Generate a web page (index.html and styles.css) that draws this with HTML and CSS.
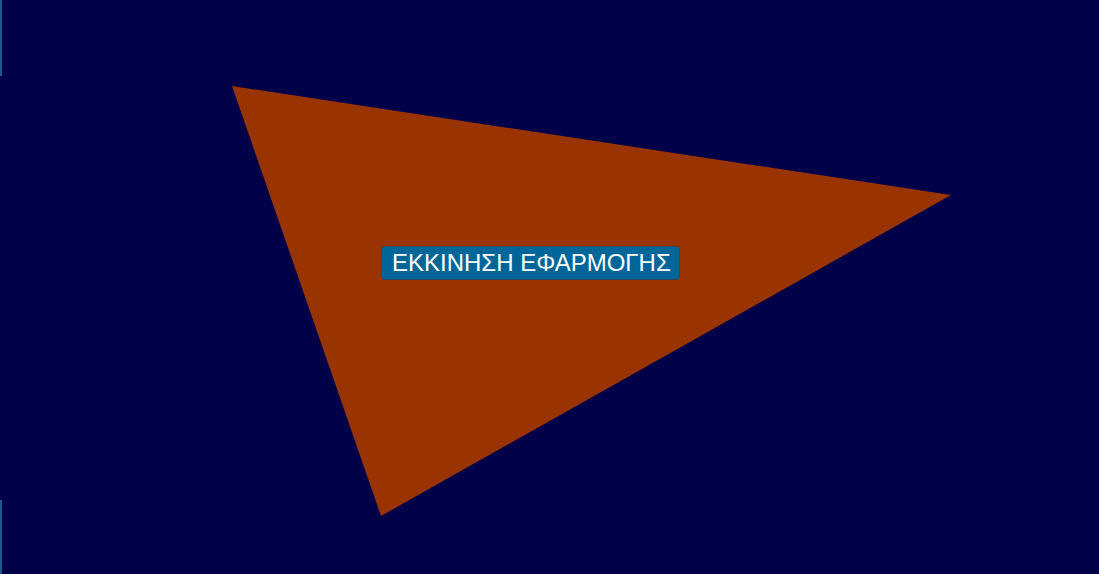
FILE: index.html
```html
<!DOCTYPE html>
<html lang="el">
<head>
<meta charset="utf-8">
<title>Εκκίνηση</title>
<link rel="stylesheet" href="styles.css">
</head>
<body>
<div class="stage">
  <div class="edge edge-top"></div>
  <div class="edge edge-bottom"></div>
  <svg class="shape" width="1099" height="574" viewBox="0 0 1099 574" aria-hidden="true">
    <polygon points="232,86 951,195 381,516" fill="#993300"/>
  </svg>
  <button class="start-btn" type="button">ΕΚΚΙΝΗΣΗ ΕΦΑΡΜΟΓΗΣ</button>
</div>
</body>
</html>
```
FILE: styles.css
```css
html, body {
  margin: 0;
  padding: 0;
  background: #000048;
  overflow: hidden;
}
.stage {
  position: relative;
  width: 1099px;
  height: 574px;
  background: #000048;
}
.shape {
  position: absolute;
  left: 0;
  top: 0;
}
.edge {
  position: absolute;
  left: 0;
  width: 2px;
  background: #1d5a8a;
}
.edge-top {
  top: 0;
  height: 76px;
}
.edge-bottom {
  top: 500px;
  height: 74px;
}
.start-btn {
  position: absolute;
  left: 381px;
  top: 246px;
  width: 299px;
  height: 34px;
  margin: 0;
  padding: 0 10px;
  box-sizing: border-box;
  background: #006699;
  border: 1px solid #2a4a66;
  border-radius: 4px;
  color: #ffffff;
  font-family: "Liberation Sans", Arial, sans-serif;
  font-size: 24px;
  line-height: 32px;
  text-align: center;
  white-space: nowrap;
  cursor: pointer;
}
```
